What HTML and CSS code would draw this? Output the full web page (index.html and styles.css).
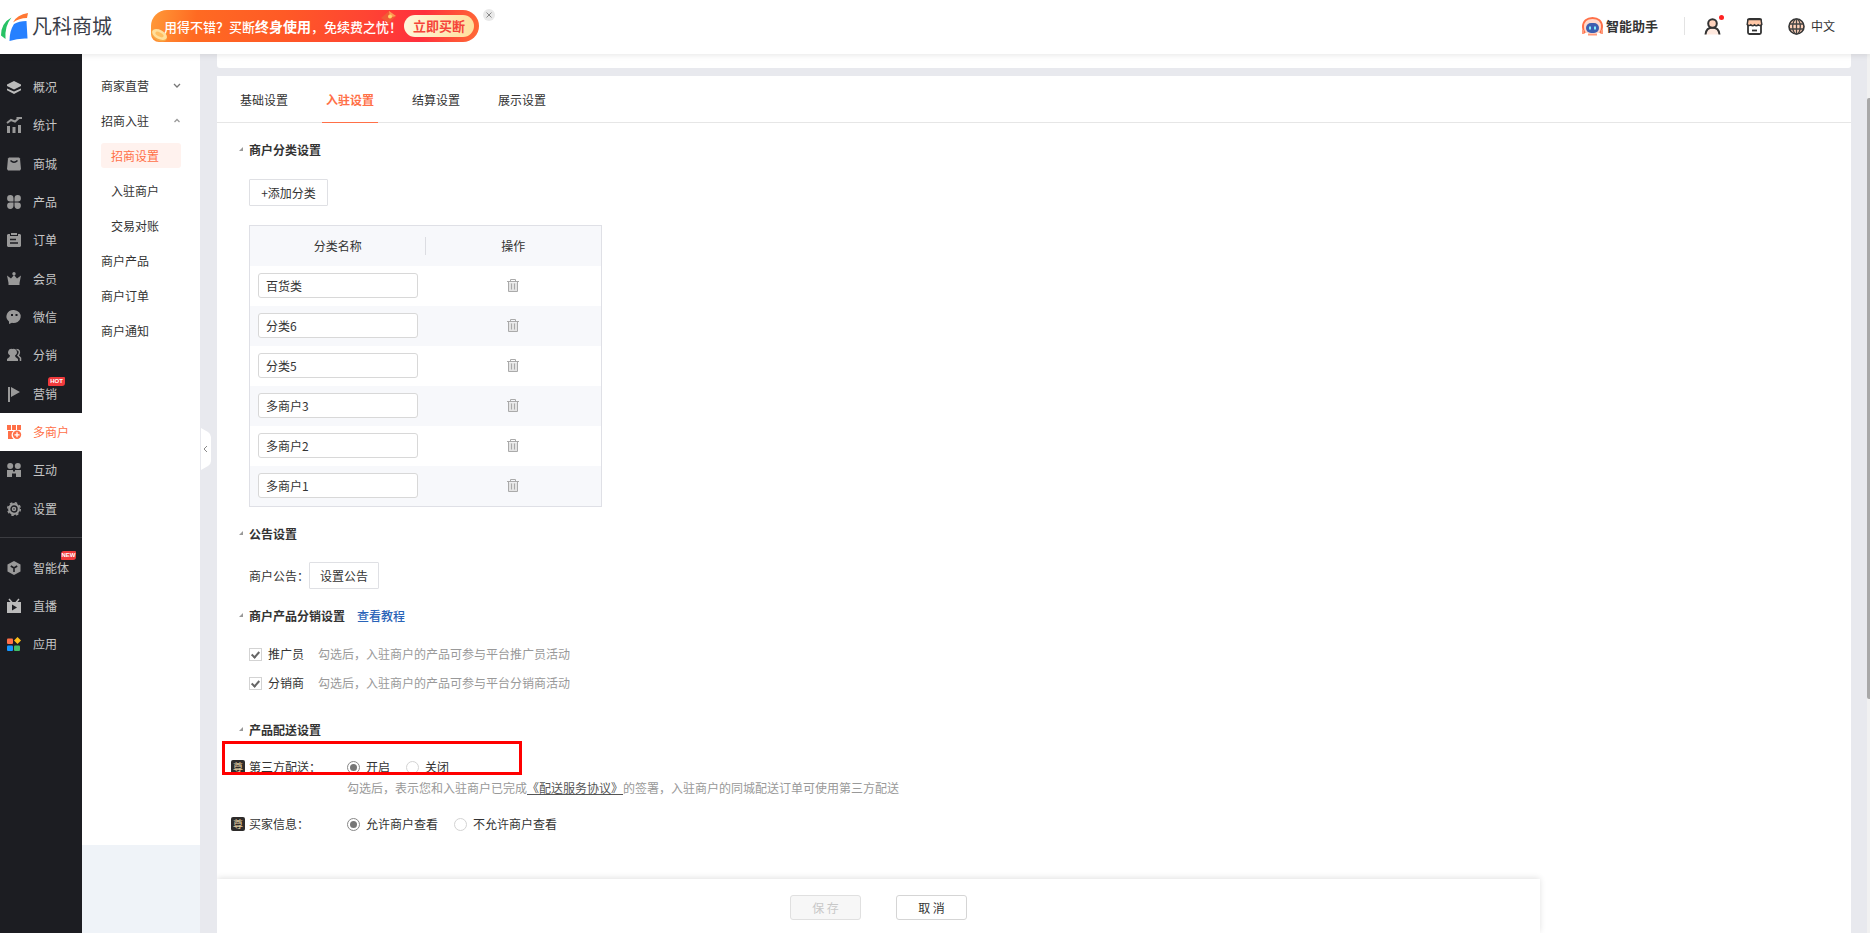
FILE: index.html
```html
<!DOCTYPE html>
<html lang="zh-CN">
<head>
    <meta charset="UTF-8">
    <meta name="viewport" content="width=device-width, initial-scale=1.0">
    <title>凡科商城</title>
    <link rel="stylesheet" href="styles.css">
</head>
<body>

<!-- 删除图标，表格各行共用 -->
<svg class="svg-defs" aria-hidden="true">
    <symbol id="icon-trash" viewBox="0 0 12 13">
        <path d="M1.500 3.500h9v9h-9z" fill="#e4e4e4"/>
        <path d="M0 2.500h12M3.500 2V.5h5V2M1.500 3v9.500h9V3M4.500 4.500v6M7.500 4.500v6" fill="none" stroke="#aaa"/>
    </symbol>
</svg>

<header class="topbar">
    <a class="logo" href="#">
        <svg width="28" height="29" viewBox="0 0 28 29" aria-hidden="true">
            <path d="M14 12Q19 9 26.500 9L27.500 26.500Q18 26 9.500 29Q9.500 19 14 12z" fill="#2680ff"/>
            <path d="M13 10.500Q17 2.500 28 1L27 6Q19 6 13 10.500z" fill="#ff7733"/>
            <path d="M11.500 5.500Q1 11 1 23.500L5.500 27Q4.500 14 11.500 5.500z" fill="#27c265"/>
        </svg>
        <span class="logo-name">凡科商城</span>
    </a>
    <a class="promo" href="#">
        <span class="promo-text">用得不错？买断<b>终身使用</b>，免续费之忧！</span>
        <span class="promo-btn">立即买断</span>
        <svg class="promo-coin" width="18" height="14" viewBox="0 0 18 14" aria-hidden="true">
            <ellipse cx="8" cy="7.500" rx="8.500" ry="5" transform="rotate(28 8 7.500)" fill="#f7a845"/>
            <ellipse cx="8.500" cy="6.500" rx="8" ry="4.500" transform="rotate(28 8.500 6.500)" fill="#ffdf9b"/>
            <ellipse cx="8.500" cy="6.500" rx="4.500" ry="2" transform="rotate(28 8.500 6.500)" fill="#ffbf62"/>
        </svg>
        <svg class="promo-packet" width="18" height="14" viewBox="0 0 18 14" aria-hidden="true">
            <path d="M9 1l7 5-7 7-8-5z" fill="#f25a35"/>
            <path d="M9 1l7 5-6 1.500z" fill="#ff9a54"/>
            <circle cx="10" cy="6.500" r="2" fill="#ffd36b"/>
        </svg>
    </a>
    <button class="promo-close" type="button" aria-label="关闭广告">
        <svg width="6" height="6" viewBox="0 0 6 6"><path d="M.5.5l5 5M5.500.5l-5 5" stroke="#888"/></svg>
    </button>

    <div class="topbar-right">
        <a class="assistant" href="#">
            <svg width="21" height="19" viewBox="0 0 21 19" aria-hidden="true">
                <path d="M3 16Q1 14 1 10C1 4 5 1 10.500 1S20 4 20 10q0 4-2 6" fill="#ffd9cb" stroke="#ff7048" stroke-width="2"/>
                <path d="M1 13v4M20 13v4M6 17.500h9" stroke="#ff9a7c" stroke-width="2"/>
                <rect x="4" y="6" width="13" height="10" rx="5" fill="#3d5fb0"/>
                <path d="M8 9.500v3M13 9.500v3" stroke="#7ff0ff" stroke-width="2"/>
            </svg>
            <span>智能助手</span>
        </a>
        <button class="icon-btn user-btn" type="button" aria-label="账号">
            <svg width="17" height="17" viewBox="0 0 17 17" fill="none" stroke="#333" stroke-width="2">
                <path d="M1.500 16.500C2 11 5 9.500 8.500 9.500S15 11 15.500 16.500" fill="#ffe9df"/>
                <circle cx="8.500" cy="5.500" r="4.300" fill="#ffd3bd"/>
            </svg>
            <i class="dot"></i>
        </button>
        <button class="icon-btn" type="button" aria-label="店铺">
            <svg width="17" height="17" viewBox="0 0 17 17" fill="none" stroke="#333">
                <rect x="2" y="1" width="13" height="15" rx="1.500" fill="#fff" stroke-width="1.800"/>
                <path d="M2 1.500h13l.8 5q-1.800 2-3.600.3-1.800 2-3.700 0-1.800 2-3.700 0Q3 8.500 1.200 6.500z" fill="#ffc7a6" stroke-width="1.500"/>
                <path d="M6 12.500h5" stroke-width="1.800"/>
            </svg>
        </button>
        <button class="icon-btn lang-btn" type="button">
            <svg width="17" height="17" viewBox="0 0 17 17" fill="none" stroke="#444" stroke-width="1.300">
                <circle cx="8.500" cy="8.500" r="7.500" fill="#ffd0b8" stroke="#333" stroke-width="1.600"/>
                <ellipse cx="8.500" cy="8.500" rx="3.800" ry="7.500"/>
                <path d="M1.500 6h14M1.500 11h14M8.500 1v15"/>
            </svg>
            <span>中文</span>
        </button>
    </div>
</header>

<div class="layout">
    <nav class="main-nav" aria-label="主导航">
        <ul class="nav-group nav-group-main">
            <li><a class="nav-link" href="#">
                <svg viewBox="0 0 14 14" fill="#bbb"><path d="M7 1l7 3.500v1.500L7 9.500 0 6V4.500z"/><path d="M0 8.500l7 3 7-3v1.700L7 14l-7-3.800z"/></svg>
                <span>概况</span></a></li>
            <li><a class="nav-link" href="#">
                <svg viewBox="0 0 14 14"><path d="M0 8h3v7H0zM5.500 9h3v6h-3zM11 7h3v8h-3z"/><path d="M0 5l4-3 4 1.500L12 0M9.500 0H14v1" fill="none" stroke="#999" stroke-width="2"/></svg>
                <span>统计</span></a></li>
            <li><a class="nav-link" href="#">
                <svg viewBox="0 0 14 14"><path d="M2 .5h10l1 1 1 10.500-1 1.500H1L0 12 1 1.500z"/><path d="M3.500 3.500q3.500 3.500 7 0" fill="none" stroke="#1c1d22" stroke-width="1.500"/></svg>
                <span>商城</span></a></li>
            <li><a class="nav-link" href="#">
                <svg viewBox="0 0 14 14"><path d="M6.500 6.500H3.200A3.200 3.200 0 1 1 6.500 3.200zM7.500 6.500V3.200A3.200 3.200 0 1 1 10.800 6.500zM6.500 7.500v3.300A3.200 3.200 0 1 1 3.200 7.500zM7.500 7.500h3.300A3.200 3.200 0 1 1 7.500 10.800z"/></svg>
                <span>产品</span></a></li>
            <li><a class="nav-link" href="#">
                <svg viewBox="0 0 14 14"><path d="M1 1h2v2h8V1h2l1 1v11l-1 1H1l-1-1V2z"/><path d="M4 0h6v2H4z"/><path d="M3 6.500h6M3 10h8" stroke="#1c1d22" stroke-width="1.500"/></svg>
                <span>订单</span></a></li>
            <li><a class="nav-link" href="#">
                <svg viewBox="0 0 14 14"><circle cx="7" cy="1.700" r="1.700"/><path d="M0 3.500l4 3L7 3l3 3.500 4-3L12.500 11v2h-11v-2z"/></svg>
                <span>会员</span></a></li>
            <li><a class="nav-link" href="#">
                <svg viewBox="0 0 14 14"><path d="M7 0a7 6.500 0 1 1-2 12.800L2 14V11.500A7 6.500 0 0 1 7 0z"/><path d="M4 4h2v2H4zM8.500 4h2v2h-2z" fill="#1c1d22"/></svg>
                <span>微信</span></a></li>
            <li><a class="nav-link" href="#">
                <svg viewBox="0 0 14 14"><path d="M5.500 1a3.500 3.500 0 0 1 2.500 6.500l.5 1.500L11 11v2H0v-2l2.500-2 .5-1.500A3.500 3.500 0 0 1 5.500 1z"/><path d="M9.500 1.500q4 .5 2.500 4.500l-1 1.500 2.500 2.500V13" fill="none" stroke="#999" stroke-width="1.500"/></svg>
                <span>分销</span></a></li>
            <li><a class="nav-link" href="#">
                <svg viewBox="0 0 14 14"><path d="M1 0h2v15H1zM4 0l9 5-9 5z"/></svg>
                <span>营销</span><em class="tag">HOT</em></a></li>
            <li><a class="nav-link active" href="#" aria-current="page">
                <svg viewBox="0 0 14 14" fill="#ff7048"><path d="M0 0h4v5H0zM5 0h4v5H5zM10 0h4v5h-4zM1 6h5.500a5 5 0 0 0 0 8H1z"/><circle cx="10" cy="9.800" r="4.200"/><path d="M7.500 9.800h5M10 7.300v5" stroke="#fff" stroke-width="1.300"/></svg>
                <span>多商户</span></a></li>
            <li><a class="nav-link" href="#">
                <svg viewBox="0 0 14 14"><circle cx="3.200" cy="3" r="3"/><circle cx="10.800" cy="3" r="3"/><path d="M0 7h6v1.500h2V7h6v7H9v-3.500H5V14H0z"/></svg>
                <span>互动</span></a></li>
            <li><a class="nav-link" href="#">
                <svg viewBox="0 0 14 14" fill="none" stroke="#999"><circle cx="7" cy="7" r="4.800" stroke-width="2.200"/><circle cx="7" cy="7" r="1.500" stroke-width="1.500"/><circle cx="7" cy="7" r="6.300" stroke-width="1.500" stroke-dasharray="2.500 2.450"/></svg>
                <span>设置</span></a></li>
        </ul>
        <ul class="nav-group nav-group-extra">
            <li><a class="nav-link" href="#">
                <svg viewBox="0 0 14 14"><path d="M7 0l6.500 3.500v7L7 14 .5 10.500v-7z"/><path d="M3.800 5L7 7l3.200-2M7 7v4" fill="none" stroke="#1c1d22" stroke-width="1.600"/></svg>
                <span>智能体</span><em class="tag tag-new">NEW</em></a></li>
            <li><a class="nav-link" href="#">
                <svg viewBox="0 0 14 14" fill="#bbb"><path d="M0 3h14v11H0z"/><path d="M2 0l3 3.500M12 0L9 3.500" stroke="#bbb" stroke-width="1.500"/><path d="M5 5.500l5 3-5 3z" fill="#1c1d22"/></svg>
                <span>直播</span></a></li>
            <li><a class="nav-link" href="#">
                <svg viewBox="0 0 14 14"><rect y="1.500" width="6" height="5.500" rx="1" fill="#ff7048"/><path d="M10.500 0L14 3.500 10.500 7 7 3.500z" fill="#ffc018"/><rect y="8.500" width="6" height="5.500" rx="1" fill="#1496ff"/><rect x="7" y="8.500" width="6" height="5.500" rx="1" fill="#42bd66"/></svg>
                <span>应用</span></a></li>
        </ul>
    </nav>

    <div class="side">
        <nav class="side-menu" aria-label="多商户菜单">
            <a class="side-link" href="#">商家直营
                <svg width="8" height="5" viewBox="0 0 8 5"><path d="M1 1l3 3 3-3" fill="none" stroke="#777" stroke-width="1.300"/></svg></a>
            <a class="side-link" href="#">招商入驻
                <svg width="8" height="5" viewBox="0 0 8 5"><path d="M1.500 4L4 1.500 6.500 4" fill="none" stroke="#999" stroke-width="1.300"/></svg></a>
            <a class="side-link sub current" href="#">招商设置</a>
            <a class="side-link sub" href="#">入驻商户</a>
            <a class="side-link sub" href="#">交易对账</a>
            <a class="side-link" href="#">商户产品</a>
            <a class="side-link" href="#">商户订单</a>
            <a class="side-link" href="#">商户通知</a>
        </nav>
        <button class="side-toggle" type="button" aria-label="收起菜单">
            <svg width="10" height="42" viewBox="0 0 10 42"><path d="M0 0l7 4q3 2 3 5v24q0 3-3 5l-7 4z" fill="#fff"/><path d="M6 18l-3 3 3 3" fill="none" stroke="#888"/></svg>
        </button>
    </div>

    <main class="content">
        <div class="card card-prev"></div>
        <div class="card card-main">
            <div class="tabs">
                <a class="tab" href="#">基础设置</a>
                <a class="tab selected" href="#">入驻设置</a>
                <a class="tab" href="#">结算设置</a>
                <a class="tab" href="#">展示设置</a>
            </div>

            <form class="settings">
                <section class="section section-category">
                    <h3 class="section-title">商户分类设置</h3>
                    <button class="btn" type="button">+添加分类</button>
                    <table class="category-table">
                        <thead>
                            <tr><th>分类名称</th><th>操作</th></tr>
                        </thead>
                        <tbody>
                            <tr>
                                <td><input type="text" value="百货类" aria-label="分类名称"></td>
                                <td><button class="del" type="button" aria-label="删除"><svg width="12" height="13"><use href="#icon-trash"/></svg></button></td>
                            </tr>
                            <tr>
                                <td><input type="text" value="分类6" aria-label="分类名称"></td>
                                <td><button class="del" type="button" aria-label="删除"><svg width="12" height="13"><use href="#icon-trash"/></svg></button></td>
                            </tr>
                            <tr>
                                <td><input type="text" value="分类5" aria-label="分类名称"></td>
                                <td><button class="del" type="button" aria-label="删除"><svg width="12" height="13"><use href="#icon-trash"/></svg></button></td>
                            </tr>
                            <tr>
                                <td><input type="text" value="多商户3" aria-label="分类名称"></td>
                                <td><button class="del" type="button" aria-label="删除"><svg width="12" height="13"><use href="#icon-trash"/></svg></button></td>
                            </tr>
                            <tr>
                                <td><input type="text" value="多商户2" aria-label="分类名称"></td>
                                <td><button class="del" type="button" aria-label="删除"><svg width="12" height="13"><use href="#icon-trash"/></svg></button></td>
                            </tr>
                            <tr>
                                <td><input type="text" value="多商户1" aria-label="分类名称"></td>
                                <td><button class="del" type="button" aria-label="删除"><svg width="12" height="13"><use href="#icon-trash"/></svg></button></td>
                            </tr>
                        </tbody>
                    </table>
                </section>

                <section class="section section-notice">
                    <h3 class="section-title">公告设置</h3>
                    <div class="notice-row">
                        <span>商户公告：</span>
                        <button class="btn btn-notice" type="button">设置公告</button>
                    </div>
                </section>

                <section class="section section-share">
                    <h3 class="section-title">商户产品分销设置<a class="help-link" href="#">查看教程</a></h3>
                    <div class="check-row">
                        <input type="checkbox" id="promoter" checked>
                        <label for="promoter">推广员</label>
                        <span class="hint">勾选后，入驻商户的产品可参与平台推广员活动</span>
                    </div>
                    <div class="check-row">
                        <input type="checkbox" id="distributor" checked>
                        <label for="distributor">分销商</label>
                        <span class="hint">勾选后，入驻商户的产品可参与平台分销商活动</span>
                    </div>
                </section>

                <section class="section section-delivery">
                    <h3 class="section-title">产品配送设置</h3>
                    <div class="radio-row marked" role="radiogroup" aria-label="第三方配送">
                        <span class="row-label"><i class="vip">尊</i>第三方配送：</span>
                        <label><input type="radio" name="delivery" checked>开启</label>
                        <label><input type="radio" name="delivery">关闭</label>
                    </div>
                    <p class="hint delivery-hint">勾选后，表示您和入驻商户已完成<a href="#">《配送服务协议》</a>的签署，入驻商户的同城配送订单可使用第三方配送</p>
                    <div class="radio-row" role="radiogroup" aria-label="买家信息">
                        <span class="row-label"><i class="vip">尊</i>买家信息：</span>
                        <label><input type="radio" name="buyer" checked>允许商户查看</label>
                        <label><input type="radio" name="buyer">不允许商户查看</label>
                    </div>
                </section>
            </form>

            <div class="action-bar">
                <button class="action" type="button" disabled>保 存</button>
                <button class="action" type="button">取 消</button>
            </div>
        </div>
    </main>
    <div class="scroll-track" aria-hidden="true"><div class="scroll-thumb"></div></div>
</div>

</body>
</html>
```
FILE: styles.css
```css
*, *::before, *::after { box-sizing: border-box; }
html, body { height: 100%; }
body {
    margin: 0;
    display: flex;
    flex-direction: column;
    overflow: hidden;
    font-family: "Noto Sans CJK SC", "Microsoft YaHei", sans-serif;
    font-size: 12px;
    line-height: 18px;
    color: #333;
    background-color: #e8e9ee;
}
a { color: inherit; text-decoration: none; }
button, input { font: inherit; color: inherit; }
button { cursor: pointer; }
ul { list-style: none; margin: 0; padding: 0; }
svg { display: block; flex-shrink: 0; }
.svg-defs { position: absolute; width: 0; height: 0; }

/* 顶栏 */
.topbar {
    position: relative;
    z-index: 2;
    flex-shrink: 0;
    height: 54px;
    display: flex;
    align-items: center;
    background-color: #fff;
    box-shadow: 0 1px 6px rgba(0,0,0,0.1);
}
.logo {
    display: flex;
    align-items: center;
    gap: 4px;
    width: 151px;
    padding-bottom: 2px;
    color: #3a3d47;
}
.logo-name {
    font-size: 20px;
    line-height: 28px;
}
.promo {
    position: relative;
    width: 328px;
    height: 32px;
    margin-bottom: 2px;
    padding: 0 5px 0 13px;
    display: flex;
    align-items: center;
    justify-content: space-between;
    border-radius: 16px 16px 16px 8px;
    background: linear-gradient(100deg, #ff9a38 0, #ff6a22 14%, #ff5a26 40%, #ff4433 65%, #ff2f3d 82%, #ff6a35 100%);
    color: #fff;
    white-space: nowrap;
}
.promo-text { font-size: 13px; font-weight: 500; }
.promo-text b { font-size: 14px; font-weight: 700; }
.promo-btn {
    position: relative;
    z-index: 1;
    width: 70px;
    flex-shrink: 0;
    margin-left: -16px;
    border-radius: 11px;
    background: linear-gradient(90deg, #fff6dc, #ffdf9c);
    color: #f5443a;
    font-size: 13px;
    font-weight: 700;
    line-height: 22px;
    text-align: center;
}
.promo-coin { position: absolute; left: 0; bottom: 0; }
.promo-packet { position: absolute; left: 229px; top: 0; }
.promo-close {
    align-self: flex-start;
    display: grid;
    place-items: center;
    width: 12px;
    height: 12px;
    margin: 9px 0 0 4px;
    padding: 0;
    border: none;
    border-radius: 50%;
    background-color: #e9e9e9;
}
.topbar-right {
    display: flex;
    align-items: center;
    height: 18px;
    margin: 0 35px 2px auto;
}
.assistant {
    display: flex;
    align-items: center;
    gap: 3px;
    height: 18px;
    padding-right: 26px;
    border-right: 1px solid #e3e3e3;
    font-size: 13px;
    font-weight: 700;
}
.icon-btn {
    position: relative;
    display: flex;
    align-items: center;
    gap: 6px;
    padding: 0;
    margin-left: 25px;
    border: none;
    background: none;
}
.user-btn { margin-left: 19px; }
.dot {
    position: absolute;
    right: -3px;
    top: -3px;
    width: 5px;
    height: 5px;
    border-radius: 50%;
    background-color: #f22;
}

/* 整体布局 */
.layout {
    flex: 1;
    min-height: 0;
    display: flex;
}
.main-nav {
    flex: 0 0 82px;
    padding-top: 14px;
    background-color: #1c1d22;
    color: #c6c6c6;
}
.nav-group { display: grid; }
.nav-group-main {
    height: 460px;
    grid-auto-rows: 1fr;
}
.nav-group-extra {
    grid-auto-rows: 38px;
    margin-top: 9px;
    padding-top: 11px;
    border-top: 1px solid #3b3c41;
}
.nav-link {
    position: relative;
    display: flex;
    align-items: center;
    gap: 12px;
    height: 100%;
    padding-left: 7px;
}
.nav-link svg {
    width: 14px;
    height: 14px;
    overflow: visible;
    fill: #999;
}
.nav-link svg[fill="#bbb"] { fill: #bbb; }
.nav-link svg[fill="none"] { fill: none; }
.nav-link.active {
    background-color: #fff;
    color: #ff7048;
}
.nav-link.active svg { fill: #ff7048; }
.tag {
    position: absolute;
    left: 48px;
    top: 2px;
    width: 17px;
    border-radius: 3px 1px;
    background-color: #f03a3c;
    color: #fff;
    font: bold 6px/9px "Liberation Sans", sans-serif;
    text-align: center;
}
.tag-new { left: 61px; width: 15px; }

/* 二级菜单 */
.side {
    position: relative;
    flex: 0 0 118px;
    background-color: #eff3f8;
}
.side-menu {
    height: 90%;
    padding: 19px 19px 0;
    background-color: #fff;
}
.side-link {
    display: flex;
    align-items: center;
    justify-content: space-between;
    height: 25px;
    margin-bottom: 10px;
}
.side-link.sub { padding-left: 10px; }
.side-link.current {
    border-radius: 3px;
    background-color: #fff2ee;
    color: #ff7048;
}
.side-toggle {
    position: absolute;
    left: 100%;
    top: 374px;
    padding: 0 0 0 1px;
    border: none;
    background: none;
}

/* 内容区 */
.content {
    flex: 1;
    min-width: 0;
    display: flex;
    flex-direction: column;
    gap: 8px;
    padding: 0 16px 0 17px;
}
.card { background-color: #fff; }
.card-prev {
    flex-shrink: 0;
    height: 14px;
    border-radius: 0 0 3px 3px;
}
.card-main {
    flex: 1;
    min-height: 0;
    display: flex;
    flex-direction: column;
}
.tabs {
    flex-shrink: 0;
    display: flex;
    gap: 30px;
    height: 47px;
    padding-left: 19px;
    border-bottom: 1px solid #e6e6e6;
}
.tab {
    width: 56px;
    height: 47px;
    line-height: 48px;
    text-align: center;
}
.tab.selected {
    border-bottom: 1px solid #ff7048;
    color: #ff7048;
    font-weight: 700;
}
.settings {
    flex: 1;
    min-height: 0;
    padding: 18px 32px 0;
}
.section-title {
    position: relative;
    margin: 0;
    font-size: 12px;
    font-weight: 700;
    line-height: 18px;
}
.section-title::before {
    content: "";
    position: absolute;
    left: -10px;
    top: 6px;
    border-left: 4px solid transparent;
    border-bottom: 4px solid #999;
}
.help-link { margin-left: 12px; color: #2a63b8; font-weight: 500; }
.btn {
    width: 79px;
    height: 27px;
    padding: 0;
    border: 1px solid #dfe0e4;
    border-radius: 1px;
    background-color: #fff;
}
.btn-notice { width: 70px; }
.section-category .btn { display: block; margin: 20px 0 19px; }

.category-table {
    width: 353px;
    table-layout: fixed;
    border-collapse: separate;
    border-spacing: 0;
    border: 1px solid #dfe0e6;
}
.category-table th,
.category-table td {
    height: 40px;
    padding: 0;
    text-align: center;
    font-weight: 400;
}
.category-table td { padding-bottom: 2px; }
.category-table thead,
.category-table tbody tr:nth-child(even) { background-color: #f7f8fb; }
.category-table th:first-child {
    background: linear-gradient(#dcdde2, #dcdde2) right center / 1px 18px no-repeat;
}
.category-table td:first-child { padding-left: 8px; text-align: left; }
.category-table input {
    display: block;
    width: 160px;
    height: 25px;
    padding: 1px 7px 0;
    border: 1px solid #d8d8d8;
    border-radius: 3px;
    background-color: #fff;
}
.del {
    display: block;
    margin: 0 auto;
    padding: 0;
    border: none;
    background: none;
}

.section-notice { margin-top: 18px; }
.notice-row {
    display: flex;
    align-items: center;
    margin-top: 19px;
}
.section-share { margin-top: 18px; }
.check-row {
    display: flex;
    align-items: center;
    height: 18px;
    margin-top: 11px;
}
.section-title + .check-row { margin-top: 20px; }
.check-row label { margin: 0 14px 0 6px; }
input[type="checkbox"],
input[type="radio"] {
    appearance: none;
    flex-shrink: 0;
    width: 13px;
    height: 13px;
    margin: 0;
    border: 1px solid #d3d3d3;
    background-color: #fff;
}
input[type="checkbox"]:checked {
    position: relative;
}
input[type="checkbox"]:checked::before {
    content: "";
    position: absolute;
    left: 3px;
    top: 1px;
    width: 5px;
    height: 8px;
    border: solid #666;
    border-width: 0 2px 2px 0;
    transform: rotate(42deg);
}
input[type="radio"] {
    display: grid;
    place-items: center;
    border-radius: 50%;
}
input[type="radio"]:checked { border-color: #888; }
input[type="radio"]:checked::before {
    content: "";
    width: 7px;
    height: 7px;
    border-radius: 50%;
    background-color: #777;
}
.hint { color: #999; }

.section-delivery { margin-top: 29px; }
.radio-row {
    display: flex;
    align-items: center;
    gap: 16px;
    height: 18px;
    margin-left: -18px;
}
.radio-row label {
    display: flex;
    align-items: center;
    gap: 6px;
}
.row-label {
    display: flex;
    align-items: center;
    gap: 4px;
    width: 100px;
    white-space: nowrap;
}
.vip {
    width: 14px;
    border-radius: 2px;
    background-color: #2e2c2b;
    color: #e3cfa2;
    font-size: 10px;
    font-style: normal;
    line-height: 14px;
    text-align: center;
}
/* 红框提示：覆盖在该行之上 */
.marked { position: relative; margin-top: 19px; }
.marked::after {
    content: "";
    position: absolute;
    left: -9px;
    top: -17px;
    width: 300px;
    height: 34px;
    border: 3px solid #f00;
    pointer-events: none;
}
.delivery-hint { margin: 3px 0 18px 98px; }
.delivery-hint a { color: #555; text-decoration: underline; }

/* 底部操作条 */
.action-bar {
    flex-shrink: 0;
    display: flex;
    justify-content: center;
    gap: 35px;
    height: 54px;
    margin-right: 311px;
    padding-top: 16px;
    background-color: #fff;
    box-shadow: 0 -1px 6px rgba(0,0,0,0.12);
    clip-path: inset(-8px -8px 0 0);
}
.action {
    width: 71px;
    height: 25px;
    padding: 0;
    border: 1px solid #d5d5d5;
    border-radius: 3px;
    background-color: #fff;
}
.action:disabled {
    border-color: #e0e0e0;
    background-color: #f7f7f7;
    color: #c8c8c8;
}

.scroll-track {
    flex: 0 0 3px;
    padding-top: 44px;
    background-color: #f1f1f1;
}
.scroll-thumb {
    height: 72%;
    border-radius: 2px 0 0 2px;
    background-color: #a8a8a8;
}
```
